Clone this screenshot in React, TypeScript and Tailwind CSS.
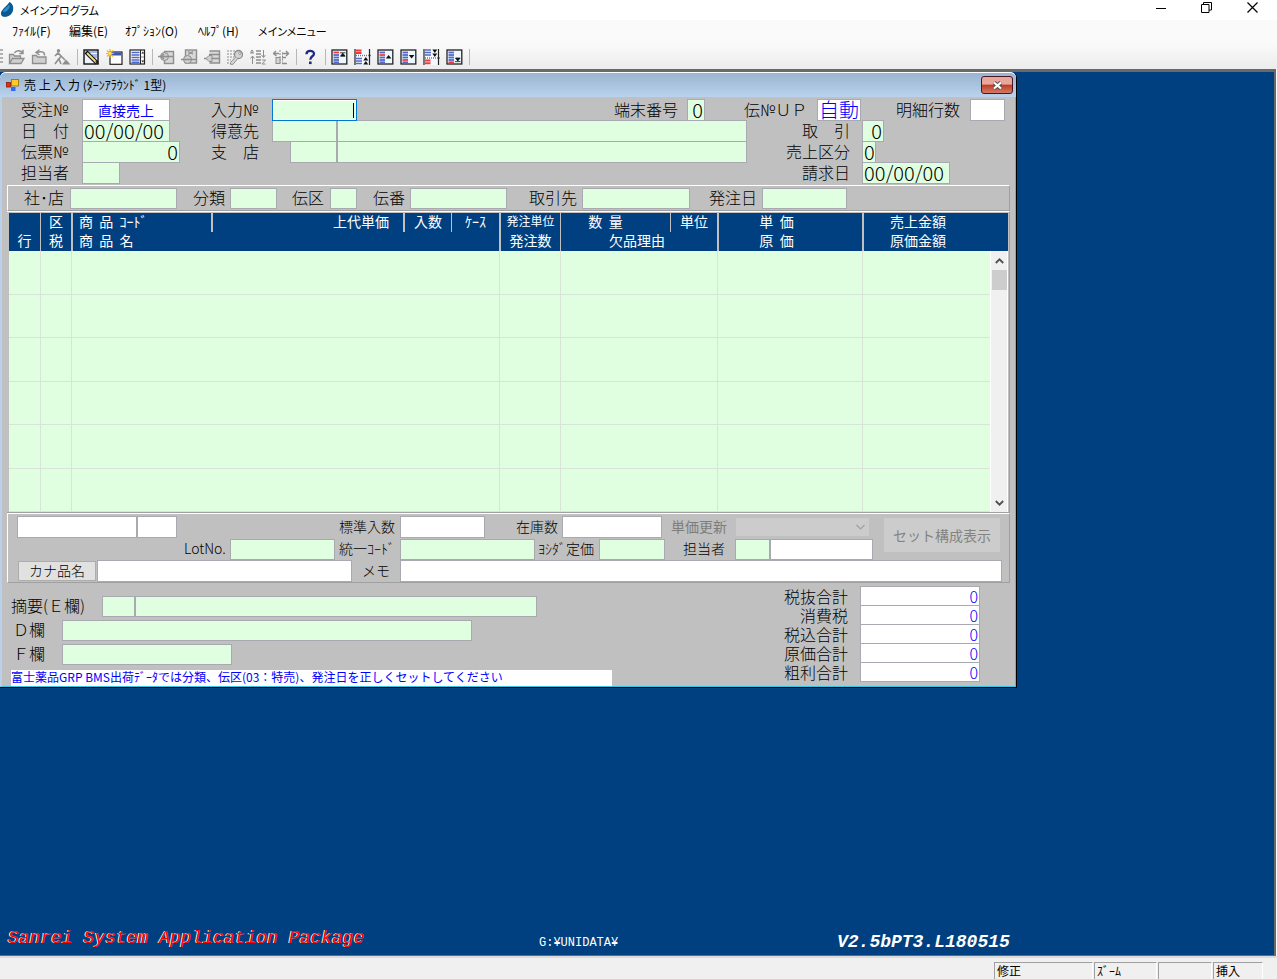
import React from "react";

type FieldProps = {
  id: string;
  w: string;
  value?: string;
  label?: string;
  tone?: "green" | "white" | "focus";
  text?: string;
  h?: string;
};

const TONES = {
  green: "bg-[#e0ffe0] border-[#a9a9b2]",
  white: "bg-white border-[#a9a9b2]",
  focus: "bg-[#e0ffe0] border-[#0078d7] shadow-[inset_0_0_0_1px_#fff]",
};

function Field({ id, w, value = "", label, tone = "green", text = "text-[20px] text-black", h = "h-[22px]" }: FieldProps) {
  return (
    <input
      id={id}
      aria-label={label}
      defaultValue={value}
      className={`block shrink-0 border px-px leading-none outline-none ${h} ${w} ${TONES[tone]} ${text}`}
    />
  );
}

function Label({ htmlFor, w = "", children }: { htmlFor: string; w?: string; children: React.ReactNode }) {
  return (
    <label htmlFor={htmlFor} className={`shrink-0 pb-0.5 whitespace-pre ${w}`}>
      {children}
    </label>
  );
}

function Slot({ w, children }: { w: string; children?: React.ReactNode }) {
  return <div className={`flex shrink-0 ${w}`}>{children}</div>;
}

/* ---------- toolbar drawings ---------- */

const G = "#8e8e8e";

function Icon({ children }: { children: React.ReactNode }) {
  return (
    <svg width="17" height="16" viewBox="0 0 17 16" fill="none" aria-hidden="true">
      {children}
    </svg>
  );
}

const folderOpen = (
  <Icon>
    <path d="M1.500 14.500v-9h4l1 1.500h6v2.500M1.500 14.500l3-5h11.500l-3 5z" stroke={G} fill="#d0d0d0" strokeWidth="1.300" />
    <path d="M6.500 4c1.500-3 6-3 8-.5M15 .8v3.700h-3.700" stroke={G} strokeWidth="1.400" />
  </Icon>
);
const folderBack = (
  <Icon>
    <path d="M1.500 14.500v-8h4l1 1.500h8.500v6.500z" stroke={G} fill="#d0d0d0" strokeWidth="1.300" />
    <path d="M13.500 6.500c.5-4-4-4.500-7.500-3M8.500 .8l-3.500 2.700 3.500 2.500" stroke={G} strokeWidth="1.400" />
  </Icon>
);
const digger = (
  <Icon>
    <circle cx="4.500" cy="1.700" r="1.700" fill={G} />
    <path d="M4 4l3 3-2 3 2 5M5 9.500l-4 5.500M1 7l3-3 5 5 2 2" stroke={G} strokeWidth="1.600" />
    <path d="M8 15.500l4-5 4.500 5z" fill={G} />
  </Icon>
);
const pencil = (
  <Icon>
    <rect x="1" y="1" width="14" height="14" fill="#eef4ff" stroke="#111" strokeWidth="1.400" />
    <path d="M2 3h12M9 6h5M11 8h3" stroke="#5b7bd0" />
    <path d="M3 3l11 11" stroke="#111" strokeWidth="4" />
    <path d="M4 4l9.500 9.500" stroke="#f2dc78" strokeWidth="2" />
    <path d="M13 11.500l3.500 4-4-2.500z" fill="#111" />
  </Icon>
);
const newWindow = (
  <Icon>
    <rect x="4" y="3" width="12" height="12.300" fill="#fff" stroke="#222" strokeWidth="1.200" />
    <path d="M5 5h10.500" stroke="#3a58b8" strokeWidth="3" />
    <path d="M4 0v9M0 4.500h8M1 1.500l6 6M7 1.500l-6 6" stroke="#f5b21a" strokeWidth="1.200" />
    <circle cx="4" cy="4.500" r="1.400" fill="#ffe36a" />
  </Icon>
);
const listBox = (
  <Icon>
    <rect x="1" y="1" width="14.500" height="14" fill="#fff" stroke="#222" strokeWidth="1.200" />
    <path d="M2.500 3.500h8M2.500 6h8M2.500 8.500h8M2.500 11h8M2.500 13.300h8" stroke="#4d68c8" strokeWidth="1.600" />
    <path d="M11.500 1v14" stroke="#222" />
    <path d="M12.300 4.500l1.500-2 1.500 2zM12.300 11.500l1.500 2 1.500-2z" fill="#222" />
    <path d="M12.500 8h2.500" stroke="#222" strokeDasharray="1 1" />
  </Icon>
);
const rowInsert = (
  <Icon>
    <rect x="6.500" y="2.500" width="9" height="12" fill="#d8d8d8" stroke={G} strokeWidth="1.400" />
    <circle cx="6.500" cy="7.500" r="4" fill="#cfcfcf" stroke={G} />
    <path d="M0 7.500h15M6 5l-3 2.500 3 2.500" stroke={G} strokeWidth="1.300" />
  </Icon>
);
const rowCircle = (
  <Icon>
    <rect x="4.500" y="1" width="11" height="13" fill="#d8d8d8" stroke={G} strokeWidth="1.400" />
    <circle cx="6.500" cy="10.500" r="4" fill="#cfcfcf" stroke={G} />
    <path d="M0 10.500h15M7 2.500l5 2.500M12 2.500l-5 3" stroke={G} strokeWidth="1.300" />
  </Icon>
);
const rowLine = (
  <Icon>
    <path d="M5.500 2h10v12h-10" fill="#d8d8d8" stroke={G} strokeWidth="1.400" />
    <path d="M5 5.500h10M8 9.500h7M0 9.500h3" stroke={G} strokeWidth="1.500" />
    <path d="M2 9.500l3-3h3v6h-3z" fill="#cfcfcf" stroke={G} />
  </Icon>
);
const keyIcon = (
  <Icon>
    <path d="M0 2h9M0 5h8M0 8h7M0 11h4M0 14h3" stroke={G} strokeDasharray="2 1" />
    <circle cx="11.500" cy="5.500" r="4" fill="#d6d6d6" stroke={G} strokeWidth="1.300" />
    <circle cx="12.800" cy="4.300" r="1.200" fill="#fff" stroke={G} />
    <path d="M8.500 8l-5 5.500v1.800h2.500l4.500-5.500" fill="#d6d6d6" stroke={G} />
  </Icon>
);
const sortIcon = (
  <Icon>
    <path d="M1 5v-3l1-1 1 1v3M1 3.500h2M2.500 7v8M.5 9.500l2-2.500 2 2.500M13.500 1v7M11.500 6l2 2.500 2-2.500M12 11h3.500l-3.500 4h3.500" stroke={G} />
    <path d="M6 2h5M6 5h5M6 8h5M6 11h5M6 14h5" stroke={G} strokeWidth="1.600" />
  </Icon>
);
const moveIcon = (
  <Icon>
    <path d="M0 4.500h6M3 2l-2.500 2.500 3 2.500M9 4.500h7M13 2l2.500 2.500-2.500 2.500" stroke={G} strokeWidth="1.400" />
    <path d="M7 1v13M9.500 3.500v10" stroke={G} strokeDasharray="2 1" />
    <rect x="3" y="8.500" width="4" height="6" fill="#d6d6d6" stroke={G} />
    <path d="M9 8.500h4M9 14.500h5" stroke={G} strokeWidth="1.600" />
  </Icon>
);

function Nav({ red, mark, split }: { red: number; mark: React.ReactNode; split?: "up" | "down" }) {
  const rows = [3.5, 6, 8.5, 11, 13.3];
  return (
    <Icon>
      {split ? (
        <>
          <path d="M1 0h15v16h-15z" fill="#f4f9ff" />
          <path d="M1 0v16M15.500 0v16" stroke="#222" strokeWidth="1.200" />
          <path d={split === "up" ? "M2 1.500h5.500M2 4h5.500" : "M2 11.500h5.500M2 14.300h5.500"} stroke="#f03a3a" strokeWidth="2" />
          <path d={split === "up" ? "M2 9.500h6M2 12h6M2 14.500h6" : "M2 1h6M2 3.500h6M2 6h6"} stroke="#5668c4" strokeWidth="1.600" />
          <path d={split === "up" ? "M0 6.500h17" : "M0 9h17"} stroke="#777" strokeWidth="1.600" strokeDasharray="1 1" />
        </>
      ) : (
        <>
          <rect x="1" y="1" width="14.800" height="14" fill="#eef7ff" stroke="#222" strokeWidth="1.300" />
          {rows.map((y, i) => (
            <path key={y} d={`M2.500 ${y}h5.500`} stroke={i === red ? "#f03a3a" : "#5668c4"} strokeWidth="1.800" />
          ))}
        </>
      )}
      {mark}
    </Icon>
  );
}

type Tool = { name: string; icon: React.ReactNode } | null;

const TOOLS: Tool[] = [
  { name: "開く", icon: folderOpen },
  { name: "戻る", icon: folderBack },
  { name: "実行", icon: digger },
  null,
  { name: "編集", icon: pencil },
  { name: "新規", icon: newWindow },
  { name: "一覧", icon: listBox },
  null,
  { name: "挿入", icon: rowInsert },
  { name: "複写", icon: rowCircle },
  { name: "行", icon: rowLine },
  { name: "キー", icon: keyIcon },
  { name: "並べ替え", icon: sortIcon },
  { name: "移動", icon: moveIcon },
  null,
  {
    name: "ヘルプ",
    icon: (
      <Icon>
        <path d="M4.500 5.200c0-4.400 7.500-4.200 7.500-.5 0 2.600-3.700 2.600-3.700 6" stroke="#1c2a80" strokeWidth="2.300" />
        <rect x="7" y="12.500" width="2.600" height="2.600" fill="#1c2a80" />
      </Icon>
    ),
  },
  null,
  { name: "先頭", icon: <Nav red={0} mark={<path d="M9 3.800h5.500M11.800 4.200l2.300 3h-4.600z" fill="#111" stroke="#111" strokeWidth=".8" />} /> },
  { name: "前頁", icon: <Nav red={0} split="up" mark={<path d="M11.800 8l2.500 3.500h-5zM11.800 12l2.500 3.500h-5z" fill="#111" />} /> },
  { name: "前行", icon: <Nav red={1} mark={<path d="M11.600 6l2.800 3.500h-5.600z" fill="#111" />} /> },
  { name: "次行", icon: <Nav red={3} mark={<path d="M11.600 9.500l2.800-3.500h-5.600z" fill="#111" />} /> },
  { name: "次頁", icon: <Nav red={0} split="down" mark={<path d="M11.800 4l2.500-3.500h-5zM11.800 8l2.500-3.500h-5z" fill="#111" />} /> },
  { name: "末尾", icon: <Nav red={4} mark={<path d="M9 12.600h5.500M11.800 12l2.300-3h-4.600z" fill="#111" stroke="#111" strokeWidth=".8" />} /> },
  null,
];

function Separator() {
  return <span className="mr-0.5 ml-[3px] h-4 w-px shrink-0 bg-[#b8b8b8]" />;
}

/* ---------- main window chrome ---------- */

function TitleBar() {
  return (
    <header className="flex h-5 shrink-0 items-center bg-white">
      <svg width="16" height="16" viewBox="0 0 16 16" className="shrink-0" aria-hidden="true">
        <path d="M9.500 0c3.500 1.500 4.500 6 3.200 9.500-1.500 3.800-5.700 6-9 5.300C.8 14.200.2 11 2 8.500 4.300 5.500 7.500 3 9.500 0z" fill="#075a94" />
        <path d="M9.200 2.500c1.300 2.500-.5 5.500-3 6.800-1.600.9-3 .8-3.300 0C4 6.500 7.500 5 9.200 2.500z" fill="#2f8fc4" />
      </svg>
      <h1 className="ml-1 text-[11px] leading-none font-normal [font-feature-settings:'palt']">メインプログラム</h1>
      <div className="ml-auto flex h-full pb-[5px]">
        <button aria-label="最小化" className="grid w-[46px] place-items-center">
          <svg width="10" height="10" viewBox="0 0 10 10"><path d="M0 5.500h10" stroke="#000" /></svg>
        </button>
        <button aria-label="元に戻す" className="grid w-[45px] place-items-center">
          <svg width="11" height="11" viewBox="0 0 11 11" fill="none" stroke="#000">
            <path d="M.5 2.500h7.500v8h-7.500zM2.500 2.500v-2h8v7.500h-2.500" />
          </svg>
        </button>
        <button aria-label="閉じる" className="grid w-[46px] place-items-center">
          <svg width="11" height="11" viewBox="0 0 11 11"><path d="M.5.5l10 10M10.500.5l-10 10" stroke="#000" strokeWidth="1.200" /></svg>
        </button>
        <span className="w-0.5" />
      </div>
    </header>
  );
}

function MenuBar() {
  return (
    <nav className="flex h-6 shrink-0 items-center bg-[#fafafa] pb-0.5 pl-3 text-[12px] leading-none font-normal">
      <button className="w-[57px] text-left whitespace-nowrap">ﾌｧｲﾙ(F)</button>
      <button className="w-14 text-left whitespace-nowrap">編集(E)</button>
      <button className="w-[73px] text-left whitespace-nowrap">ｵﾌﾟｼｮﾝ(O)</button>
      <button className="w-[60px] text-left whitespace-nowrap">ﾍﾙﾌﾟ(H)</button>
      <button className="text-left text-[11px] whitespace-nowrap [font-feature-settings:'palt']">メインメニュー</button>
    </nav>
  );
}

function ToolBar() {
  return (
    <div className="flex h-[25px] shrink-0 items-center bg-linear-to-b from-[#fafafa] to-[#ececec]">
      <span className="mr-0.5 h-4 w-[3px] shrink-0 bg-[repeating-linear-gradient(#b0b0b0_0_2px,#f4f4f4_2px_4px)]" />
      {TOOLS.map((t, i) =>
        t ? (
          <button key={i} aria-label={t.name} className="grid h-5 w-[23px] shrink-0 place-items-center">
            {t.icon}
          </button>
        ) : (
          <Separator key={i} />
        )
      )}
    </div>
  );
}

/* ---------- sales entry form ---------- */

function HeaderFields() {
  const row = "flex h-[21px] items-center";
  return (
    <section className="pt-0.5 pl-[19px] text-[16px] leading-none">
      <div className={row}>
        <Label htmlFor="order" w="w-[61px]">受注№</Label>
        <Slot w="w-[129px]">
          <Field id="order" w="w-[88px]" tone="white" value="直接売上" text="text-[14px] font-normal text-center text-[#0000ff]" />
        </Slot>
        <Label htmlFor="entry" w="w-[61px]">入力№</Label>
        <Slot w="w-[342px]">
          <div className="relative">
            <Field id="entry" w="w-[85px]" tone="focus" />
            <span className="absolute top-1 right-[3px] h-[15px] w-px bg-black" />
          </div>
        </Slot>
        <Label htmlFor="term" w="w-[73px]">端末番号</Label>
        <Slot w="w-[57px]"><Field id="term" w="w-[18px]" value="0" text="text-[20px] text-right" /></Slot>
        <Label htmlFor="noup" w="w-[73px]">伝№ＵＰ</Label>
        <Slot w="w-[79px]">
          <Field id="noup" w="w-[44px]" tone="white" value="自動" text="text-[20px] text-[#0000ff]" />
        </Slot>
        <Label htmlFor="lines" w="w-[74px]">明細行数</Label>
        <Field id="lines" w="w-[35px]" tone="white" />
      </div>
      <div className={row}>
        <Label htmlFor="date" w="w-[61px]">日　付</Label>
        <Slot w="w-[129px]"><Field id="date" w="w-[88px]" value="00/00/00" /></Slot>
        <Label htmlFor="cust" w="w-[61px]">得意先</Label>
        <Slot w="w-[530px]">
          <Field id="cust" w="w-[65px]" />
          <Field id="custname" label="得意先名" w="w-[410px]" />
        </Slot>
        <Label htmlFor="deal" w="w-[60px]">取　引</Label>
        <Field id="deal" w="w-[22px]" value="0" text="text-[20px] text-right" />
      </div>
      <div className={row}>
        <Label htmlFor="slip" w="w-[61px]">伝票№</Label>
        <Slot w="w-[129px]"><Field id="slip" w="w-[98px]" value="0" text="text-[20px] text-right" /></Slot>
        <Label htmlFor="branch" w="w-[79px]">支　店</Label>
        <Slot w="w-[496px]">
          <Field id="branch" w="w-[47px]" />
          <Field id="branchname" label="支店名" w="w-[410px]" />
        </Slot>
        <Label htmlFor="kind" w="w-[76px]">売上区分</Label>
        <Field id="kind" w="w-[14px]" value="0" text="text-[20px]" />
      </div>
      <div className={row}>
        <Label htmlFor="staff" w="w-[61px]">担当者</Label>
        <Slot w="w-[720px]"><Field id="staff" w="w-[38px]" /></Slot>
        <Label htmlFor="bill" w="w-[60px]">請求日</Label>
        <Field id="bill" w="w-[88px]" value="00/00/00" />
      </div>
    </section>
  );
}

const BEVEL = "border border-t-white border-l-white border-r-[#a0a0a0] border-b-[#a0a0a0]";

function KeyFields() {
  return (
    <section className={`mx-[5px] flex h-[26px] items-center pl-4 text-[16px] leading-none ${BEVEL}`}>
      <Label htmlFor="shop" w="w-[46px]">社･店</Label>
      <Slot w="w-[123px]"><Field id="shop" w="w-[107px]" h="h-[21px]" /></Slot>
      <Label htmlFor="class" w="w-[37px]">分類</Label>
      <Slot w="w-[62px]"><Field id="class" w="w-[47px]" h="h-[21px]" /></Slot>
      <Label htmlFor="zone" w="w-[38px]">伝区</Label>
      <Slot w="w-[43px]"><Field id="zone" w="w-[27px]" h="h-[21px]" /></Slot>
      <Label htmlFor="num" w="w-[37px]">伝番</Label>
      <Slot w="w-[119px]"><Field id="num" w="w-[97px]" h="h-[21px]" /></Slot>
      <Label htmlFor="client" w="w-[53px]">取引先</Label>
      <Slot w="w-[127px]"><Field id="client" w="w-[108px]" h="h-[21px]" /></Slot>
      <Label htmlFor="odate" w="w-[53px]">発注日</Label>
      <Field id="odate" w="w-[85px]" h="h-[21px]" />
    </section>
  );
}

function Chevron({ flip }: { flip?: boolean }) {
  return (
    <svg width="9" height="6" viewBox="0 0 9 6" aria-hidden="true">
      <path d={flip ? "M.8 1l3.700 3.700L8.200 1" : "M.8 5l3.700-3.700L8.200 5"} stroke="#505050" strokeWidth="1.800" fill="none" />
    </svg>
  );
}

function DetailTable() {
  const th = "h-[19px] overflow-visible p-0 pb-1 font-normal whitespace-pre";
  const thick = "border-l-2 border-[#c0c0c0]";
  const thin = "border-l border-[#c0c0c0]";
  const cols = ["w-[31px]", "w-[31px]", "w-[140px]", "w-[192px]", "w-[48px]", "w-[48px]", "w-[61px]", "w-[110px]", "w-[47px]", "w-[145px]", "w-[128px]", "w-[18px]"];
  const td = "border-b border-[#d8e4d8] p-0";
  const tdl = `${td} border-l`;
  return (
    <section className="mx-[5px] border-t border-r border-b border-white border-r-[#a0a0a0] border-b-[#a0a0a0] pt-px pl-0.5">
      <table className="w-[999px] table-fixed border-separate border-spacing-0 text-[14px] leading-none">
        <colgroup>
          {cols.map((c, i) => <col key={i} className={c} />)}
        </colgroup>
        <thead className="bg-[#004080] text-white">
          <tr>
            <th rowSpan={2} className={`${th} align-bottom`}>行</th>
            <th className={`${th} ${thin}`}>区</th>
            <th className={`${th} ${thick} pl-1.5 text-left`}>商  品  ｺｰﾄﾞ</th>
            <th className={`${th} ${thick} pr-3.5 text-right`}>上代単価</th>
            <th className={`${th} ${thick}`}>入数</th>
            <th className={`${th} ${thin}`}>ｹｰｽ</th>
            <th className={`${th} ${thick} text-[12px]`}>発注単位</th>
            <th className={`${th} ${thin} pr-5`}>数  量</th>
            <th className={`${th} ${thin}`}>単位</th>
            <th className={`${th} ${thick} pr-7`}>単  価</th>
            <th colSpan={2} className={`${th} ${thick} pr-9`}>売上金額</th>
          </tr>
          <tr>
            <th className={`${th} ${thin}`}>税</th>
            <th colSpan={4} className={`${th} ${thick} pl-1.5 text-left`}>商  品  名</th>
            <th className={`${th} ${thick}`}>発注数</th>
            <th colSpan={2} className={`${th} ${thin} pr-1`}>欠品理由</th>
            <th className={`${th} ${thick} pr-7`}>原  価</th>
            <th colSpan={2} className={`${th} ${thick} pr-9`}>原価金額</th>
          </tr>
        </thead>
        <tbody className="bg-[#e0ffe0]">
          {[0, 1, 2, 3, 4, 5].map((r) => (
            <tr key={r} className="h-[43px]">
              <td className={td} />
              <td className={tdl} />
              <td colSpan={4} className={tdl} />
              <td className={tdl} />
              <td colSpan={2} className={tdl} />
              <td className={tdl} />
              <td className={tdl} />
              {r === 0 && (
                <td rowSpan={6} className="border-x border-white bg-[#f0f0f0] p-0 align-top">
                  <div className="flex h-[261px] flex-col items-center justify-between">
                    <div className="flex w-full flex-col items-center">
                      <button aria-label="上へ" className="grid h-[19px] w-full place-items-center"><Chevron /></button>
                      <span className="block h-5 w-[15px] bg-[#cdcdcd]" />
                    </div>
                    <button aria-label="下へ" className="grid h-[18px] w-full place-items-center"><Chevron flip /></button>
                  </div>
                </td>
              )}
            </tr>
          ))}
        </tbody>
      </table>
    </section>
  );
}

function ItemPanel() {
  return (
    <section className={`mx-[5px] h-[70px] pt-0.5 pl-[9px] text-[14px] leading-none ${BEVEL}`}>
      <div className="flex">
        <div>
          <div className="flex h-[22px] items-center">
            <Slot w="w-[322px]">
              <Field id="icode" label="商品コード" w="w-[120px]" tone="white" />
              <Field id="isub" label="商品枝番" w="w-[40px]" tone="white" />
            </Slot>
            <Label htmlFor="std" w="w-[61px]">標準入数</Label>
            <Slot w="w-[116px]"><Field id="std" w="w-[85px]" tone="white" /></Slot>
            <Label htmlFor="stock" w="w-[46px]">在庫数</Label>
            <Slot w="w-[109px]"><Field id="stock" w="w-[100px]" tone="white" /></Slot>
            <label htmlFor="upd" className="w-[65px] shrink-0 pb-0.5 font-normal text-[#7d7d7d]">単価更新</label>
            <div className="relative h-[18px] w-[133px]">
              <select id="upd" disabled className="block h-[18px] w-full appearance-none bg-[#cccccc]" />
              <svg width="9" height="6" viewBox="0 0 9 6" className="pointer-events-none absolute top-1.5 right-1" aria-hidden="true">
                <path d="M.5 1l4 4 4-4" stroke="#a0a0a0" strokeWidth="1.200" fill="none" />
              </svg>
            </div>
          </div>
          <div className="flex h-[22px] items-center">
            <Label htmlFor="lot" w="w-[213px] pl-[167px]">LotNo.</Label>
            <Slot w="w-[109px]"><Field id="lot" w="w-[105px]" h="h-[21px]" /></Slot>
            <Label htmlFor="ucode" w="w-[61px]">統一ｺｰﾄﾞ</Label>
            <Slot w="w-[138px]"><Field id="ucode" w="w-[135px]" h="h-[21px]" /></Slot>
            <Label htmlFor="price" w="w-[61px]">ﾖｼﾀﾞ定価</Label>
            <Slot w="w-[84px]"><Field id="price" w="w-[66px]" h="h-[21px]" /></Slot>
            <Label htmlFor="rep" w="w-[52px]">担当者</Label>
            <Field id="rep" w="w-[35px]" h="h-[21px]" />
            <Field id="repname" label="担当者名" w="w-[103px]" tone="white" h="h-[21px]" />
          </div>
        </div>
        <button disabled className="mt-0.5 ml-[11px] h-[34px] w-[116px] bg-[#cccccc] text-[14px] font-normal text-[#838383]">セット構成表示</button>
      </div>
      <div className="flex h-[22px] items-center">
        <Slot w="w-[80px]">
          <button className="ml-px h-5 w-[78px] border border-[#adadad] bg-[#e1e1e1] pb-0.5 text-[14px] leading-none">カナ品名</button>
        </Slot>
        <Slot w="w-[265px]"><Field id="kana" label="カナ品名" w="w-[255px]" tone="white" /></Slot>
        <Label htmlFor="memo" w="w-[38px]">メモ</Label>
        <Field id="memo" w="w-[602px]" tone="white" />
      </div>
    </section>
  );
}

const TOTALS = ["税抜合計", "消費税", "税込合計", "原価合計", "粗利合計"];

function FooterFields() {
  return (
    <section className="flex justify-between pr-[35px] pl-[9px] text-[16px] leading-none">
      <div className="pt-[11px]">
        <div className="flex h-6 items-center">
          <Label htmlFor="ecol" w="w-[91px]">摘要(Ｅ欄)</Label>
          <Field id="ecol" w="w-[33px]" h="h-[21px]" />
          <Field id="ecolname" label="摘要" w="w-[402px]" h="h-[21px]" />
        </div>
        <div className="flex h-6 items-center">
          <Label htmlFor="dcol" w="w-[51px] pl-0.5">Ｄ欄</Label>
          <Field id="dcol" w="w-[410px]" h="h-[21px]" />
        </div>
        <div className="flex h-6 items-center">
          <Label htmlFor="fcol" w="w-[51px] pl-0.5">Ｆ欄</Label>
          <Field id="fcol" w="w-[170px]" h="h-[21px]" />
        </div>
        <p className="mt-1 flex h-4 w-[601px] items-center bg-white pb-0.5 text-[12px] font-normal whitespace-pre text-[#0000ff]">
          富士薬品GRP BMS出荷ﾃﾞｰﾀでは分類、伝区(03：特売)、発注日を正しくセットしてください
        </p>
      </div>
      <div className="pt-[3px]">
        {TOTALS.map((t) => (
          <div key={t} className="flex h-[19px] items-center justify-end">
            <label htmlFor={t} className="mr-3">{t}</label>
            <Field id={t} w="w-[120px]" h="h-5" tone="white" value="0" text="text-[16px] text-right text-[#0000ff]" />
          </div>
        ))}
      </div>
    </section>
  );
}

function SalesWindow() {
  return (
    <section className="w-[1017px] shrink-0 rounded-t-md border-r border-b border-black bg-[#b9d1ea]">
      <div className="flex h-[25px] items-center rounded-t-md border-t border-white bg-linear-to-b from-[#9ab4d1] to-[#b9d3ee] pr-[3px] pl-1.5">
        <svg width="13" height="12" viewBox="0 0 13 12" aria-hidden="true">
          <rect x="5.500" y=".5" width="7" height="6.500" fill="#ffc928" stroke="#9a6a00" strokeWidth=".8" />
          <rect x=".5" y="3.500" width="4" height="4.500" fill="#e03010" stroke="#8a1c00" strokeWidth=".8" />
          <rect x="5" y="8" width="4.500" height="4" fill="#2f6df0" />
        </svg>
        <h2 className="ml-[5px] text-[12px] leading-none font-normal whitespace-pre">売 上 入 力 (ﾀｰﾝｱﾗｳﾝﾄﾞ 1型)</h2>
        <button
          aria-label="閉じる"
          className="ml-auto grid h-[18px] w-8 place-items-center rounded-[3px] border border-[#4a1420] bg-linear-to-b from-[#e8a79b] from-45% via-[#bb3a22] via-50% to-[#d57a62]"
        >
          <svg width="11" height="9" viewBox="0 0 11 9" aria-hidden="true">
            <path d="M2 1.500l7 6M9 1.500l-7 6" stroke="#5a4a50" strokeWidth="4" />
            <path d="M2 1.500l7 6M9 1.500l-7 6" stroke="#fff" strokeWidth="2.200" />
          </svg>
        </button>
      </div>
      <div className="border-r border-b border-l-2 border-[#30c8e8] border-l-[#b9d1ea] bg-[#c0c0c0]">
        <HeaderFields />
        <div className="pt-0.5"><KeyFields /></div>
        <DetailTable />
        <ItemPanel />
        <FooterFields />
      </div>
    </section>
  );
}

function StatusBar() {
  const cell = "flex h-[17px] items-center border-t border-l border-[#a0a0a0] border-r border-r-white pl-0.5";
  return (
    <footer className="flex h-[23px] shrink-0 items-end justify-end gap-px border-t-2 border-[#dcdcdc] bg-[#f0f0f0] pr-3.5 text-[12px] leading-none font-normal">
      <span className={`${cell} w-[99px]`}>修正</span>
      <span className={`${cell} w-[63px]`}>ｽﾞｰﾑ</span>
      <span className={`${cell} w-[54px]`} />
      <span className={`${cell} w-[50px]`}>挿入</span>
    </footer>
  );
}

export default function App() {
  return (
    <div className="flex h-screen min-w-[1017px] flex-col overflow-hidden bg-white font-['Noto_Sans_CJK_JP',sans-serif] font-light text-black">
      <TitleBar />
      <MenuBar />
      <ToolBar />
      <main className="mr-px flex min-h-0 flex-1 flex-col justify-between border-t-3 border-r-2 border-b border-[#696969] bg-[#004080]">
        <SalesWindow />
        <div className="flex items-end pb-1 pl-2 font-['Liberation_Mono',monospace] leading-none">
          <span className="w-[531px] pb-1 text-[18px] text-[#ff0000] italic [text-shadow:-1px_0_0_#fff]">Sanrei System Application Package</span>
          <span className="w-[298px] pb-0.5 text-[12px] text-white">G:¥UNIDATA¥</span>
          <span className="text-[18px] font-bold text-white italic">V2.5bPT3.L180515</span>
        </div>
      </main>
      <StatusBar />
    </div>
  );
}
